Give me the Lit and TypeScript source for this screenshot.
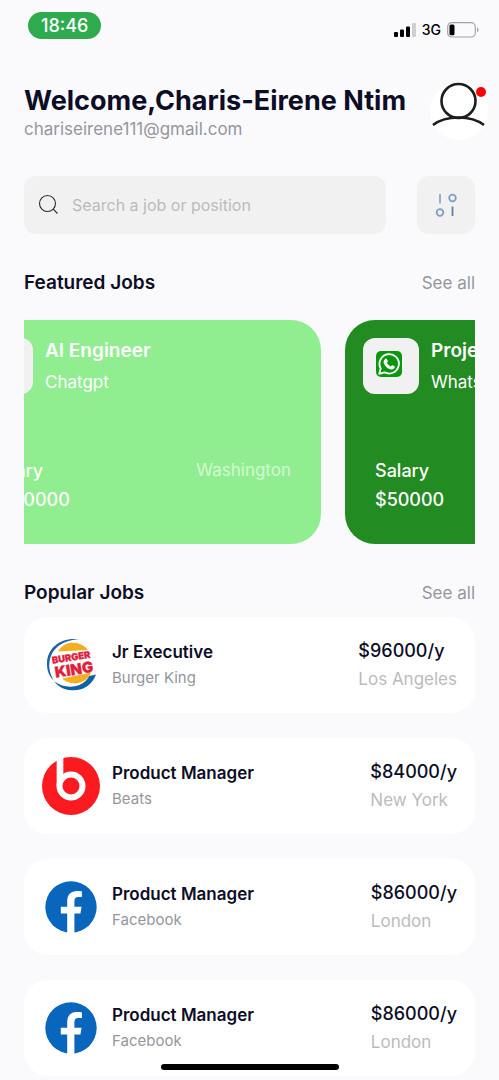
import { LitElement, html, css, svg } from "lit";
import { customElement, property, query } from "lit/decorators.js";

interface FeaturedJob {
  title: string;
  company: string;
  salary: string;
  location: string;
  tone: "light" | "dark";
  whatsapp: boolean;
}

interface PopularJob {
  title: string;
  company: string;
  salary: string;
  location: string;
  logo: "burger" | "beats" | "facebook";
}

const FEATURED: FeaturedJob[] = [
  { title: "AI Engineer", company: "Chatgpt", salary: "$200000", location: "Washington", tone: "light", whatsapp: false },
  { title: "Project Manager", company: "Whatsapp", salary: "$50000", location: "London", tone: "dark", whatsapp: true },
];

const POPULAR: PopularJob[] = [
  { title: "Jr Executive", company: "Burger King", salary: "$96000/y", location: "Los Angeles", logo: "burger" },
  { title: "Product Manager", company: "Beats", salary: "$84000/y", location: "New York", logo: "beats" },
  { title: "Product Manager", company: "Facebook", salary: "$86000/y", location: "London", logo: "facebook" },
  { title: "Product Manager", company: "Facebook", salary: "$86000/y", location: "London", logo: "facebook" },
];

const burgerLogo = svg`
  <path d="M38 3.500C20 .5 5.500 11 5 27c-.2 7 2 13 6.500 17.500C8.500 38 6.500 33 7.500 26 9.500 11.500 22 3.500 38 3.500Z" fill="#1c62a8" />
  <path d="M16 15.500C20 8.500 26 6.300 32 6.700c6 .4 11 3.300 14 7.300Z" fill="#f5ae22" />
  <path d="M20 42.500l29-6C47 42.500 41 46.800 34 47.300c-5.500.4-10.500-1.300-14-4.800Z" fill="#f5ae22" />
  <path d="M12.500 45.500C24 54 41 52 47.300 40l6.700-1.500C50 50 40 54.800 29.700 54.300 22 54 16.500 51 12.500 45.500Z" fill="#1160a8" />
  <g transform="rotate(-9 31 27)" fill="#e01f3d" stroke="#e01f3d" stroke-width=".3" font-family="Inter, sans-serif" font-weight="900" text-anchor="middle">
    <text x="30" y="24.500" font-size="9.500">BURGER</text>
    <text x="31" y="39" font-size="15">KING</text>
  </g>`;

const beatsLogo = svg`
  <circle cx="29" cy="29" r="29" fill="#fb1a20" />
  <path d="M18 0v29" stroke="#fff" stroke-width="6.700" fill="none" />
  <circle cx="29" cy="29" r="11.500" fill="#fb1a20" stroke="#fff" stroke-width="6" />`;

const facebookLogo = svg`
  <circle cx="29" cy="29" r="25.700" fill="#0866bd" />
  <path d="M25.200 55V35.500h-6.400v-6.700h6.400v-5.600c0-7 3.800-10.300 10-10.300 2 0 3.600.2 4.700.4v5.800h-3.600c-3 0-3.900 1.700-3.900 4.300v5.400h7.200l-1.200 6.700h-6V55Z" fill="#fff" />`;

const LOGOS = { burger: burgerLogo, beats: beatsLogo, facebook: facebookLogo };

@customElement("featured-card")
export class FeaturedCard extends LitElement {
  static styles = css`
    :host {
      display: block;
      flex: 0 0 362px;
    }
    .card {
      box-sizing: border-box;
      display: flex;
      flex-direction: column;
      justify-content: space-between;
      min-height: 224px;
      padding: 18px 30px 30px 18px;
      border-radius: 30px;
      color: #fff;
    }
    .light { background: #90ee90; }
    .dark { background: #228b22; }
    .top {
      display: flex;
      gap: 12px;
    }
    .badge {
      display: grid;
      place-items: center;
      width: 56px;
      height: 56px;
      border-radius: 12px;
      background: #f1f1f1;
    }
    .badge svg { width: 26px; height: 26px; margin: 0 4px 4px 0; }
    .title {
      margin: 0;
      font-size: 19px;
      line-height: 26px;
      font-weight: 600;
    }
    .company {
      margin: 6px 0 0;
      font-size: 17px;
      line-height: 24px;
    }
    .bottom {
      display: flex;
      justify-content: space-between;
      padding-left: 12px;
      font-size: 18px;
      line-height: 29px;
    }
    .bottom p { margin: 0; font-weight: 500; }
    .bottom .place { font-size: 17px; font-weight: 400; opacity: 0.6; }
  `;

  @property({ attribute: false }) job!: FeaturedJob;

  render() {
    const { title, company, salary, location, tone, whatsapp } = this.job;
    return html`
      <article class="card ${tone}">
        <div class="top">
          <div class="badge">
            ${whatsapp
              ? html`<svg viewBox="0 0 26 26" aria-hidden="true">
                  <rect width="26" height="26" rx="5" fill="#0a970f" />
                  <path d="M3.200 22.800l1.500-5.300a9.700 9.700 0 1 1 3.800 3.800Z" fill="none" stroke="#fff" stroke-width="1.800" stroke-linejoin="round" />
                  <path d="M9.300 7.700c.6-.5 1.300-.4 1.600.2l.9 2c.3.600-.7 1.400-.9 1.900.8 1.600 2.100 2.800 3.800 3.600.6-.3 1.200-1.500 1.800-1.200l2 1c.6.400.3 1.500-.2 2.100-1 1.100-2.400 1.400-4 .900-3-.8-5.500-3.100-6.500-6-.6-1.700.2-3.500 1.500-4.500Z" fill="#fff" />
                </svg>`
              : ""}
          </div>
          <div>
            <h3 class="title">${title}</h3>
            <p class="company">${company}</p>
          </div>
        </div>
        <div class="bottom">
          <div>
            <p>Salary</p>
            <p>${salary}</p>
          </div>
          <p class="place">${location}</p>
        </div>
      </article>
    `;
  }
}

@customElement("job-row")
export class JobRow extends LitElement {
  static styles = css`
    :host { display: block; }
    .row {
      display: flex;
      align-items: center;
      gap: 12px;
      box-sizing: border-box;
      min-height: 96px;
      padding: 0 18px;
      border-radius: 24px;
      background: #fff;
    }
    .logo { flex: none; width: 58px; height: 58px; }
    .role { flex: 1; }
    .title, .company, .pay, .place { margin: 0; }
    .title {
      font-size: 17px;
      line-height: 26px;
      font-weight: 600;
      color: #0d0d26;
    }
    .company {
      font-size: 15px;
      line-height: 26px;
      color: #95969d;
    }
    .pay {
      font-size: 18px;
      line-height: 29px;
      font-weight: 500;
      color: #0d0d26;
    }
    .place {
      font-size: 17px;
      line-height: 29px;
      color: #bbbbbe;
    }
  `;

  @property({ attribute: false }) job!: PopularJob;

  render() {
    const { title, company, salary, location, logo } = this.job;
    return html`
      <article class="row">
        <svg class="logo" viewBox="0 0 58 58" aria-hidden="true">${LOGOS[logo]}</svg>
        <div class="role">
          <h3 class="title">${title}</h3>
          <p class="company">${company}</p>
        </div>
        <div>
          <p class="pay">${salary}</p>
          <p class="place">${location}</p>
        </div>
      </article>
    `;
  }
}

@customElement("app-root")
export class AppRoot extends LitElement {
  static styles = css`
    :host {
      display: block;
      min-height: 100vh;
      background: #fafafd;
      color: #0d0d26;
      font-family: Inter, "Liberation Sans", sans-serif;
    }
    .status {
      display: flex;
      align-items: center;
      justify-content: space-between;
      padding: 12px 20px 0 28px;
    }
    .clock {
      padding: 0 13px;
      border-radius: 14px;
      background: #2fab4f;
      color: #fff;
      font-size: 18px;
      line-height: 27px;
      font-weight: 500;
    }
    .signals {
      display: flex;
      align-items: center;
      gap: 6px;
      padding-top: 8px;
      color: #000;
      font-size: 14px;
      line-height: 19px;
      font-weight: 500;
    }
    .signals svg { display: block; }
    .header {
      display: flex;
      align-items: flex-end;
      justify-content: space-between;
      gap: 12px;
      padding: 43px 11px 0 24px;
    }
    .welcome {
      margin: 0;
      font-size: 27px;
      line-height: 34px;
      font-weight: 700;
    }
    .email {
      margin: 0;
      font-size: 17px;
      line-height: 22px;
      color: #95969d;
    }
    .avatar {
      position: relative;
      flex: none;
      width: 58px;
      height: 58px;
      padding: 0;
      border: 0;
      border-radius: 50%;
      background: #fff;
    }
    .avatar svg { display: block; }
    .dot {
      position: absolute;
      top: 5px;
      right: 2px;
      width: 10px;
      height: 10px;
      border-radius: 50%;
      background: #f00;
    }
    .content { padding: 36px 24px 5px; }
    .search {
      display: flex;
      justify-content: space-between;
      gap: 31px;
    }
    .field {
      flex: 1;
      display: flex;
      align-items: center;
      gap: 12px;
      height: 58px;
      padding: 0 14px;
      border-radius: 12px;
      background: #f1f1f1;
    }
    .field svg { flex: none; }
    .input {
      flex: 1;
      min-width: 0;
      padding: 0;
      border: 0;
      outline: 0;
      background: none;
      color: #0d0d26;
      font-family: inherit;
      font-size: 16px;
      line-height: 24px;
    }
    .input::placeholder { color: #bbbbbe; opacity: 1; }
    .filter {
      display: grid;
      place-items: center;
      width: 58px;
      height: 58px;
      padding: 0;
      border: 0;
      border-radius: 12px;
      background: #f1f1f1;
    }
    .heading {
      display: flex;
      align-items: center;
      justify-content: space-between;
      margin-top: 36px;
    }
    .heading h2 {
      margin: 0;
      font-size: 19px;
      line-height: 26px;
      font-weight: 600;
    }
    .heading a {
      color: #95969d;
      font-size: 17px;
      line-height: 26px;
      text-decoration: none;
    }
    .carousel {
      display: flex;
      gap: 24px;
      margin-top: 24px;
      overflow-x: auto;
      scrollbar-width: none;
    }
    .jobs {
      display: flex;
      flex-direction: column;
      gap: 25px;
      margin-top: 11px;
    }
    .home {
      position: fixed;
      bottom: 10px;
      left: 50%;
      width: 178px;
      height: 6px;
      border-radius: 3px;
      background: #000;
      transform: translateX(-50%);
    }
  `;

  @query(".carousel") carousel!: HTMLElement;

  async firstUpdated() {
    // Open the carousel partway through the first card, so that the next one peeks in.
    const cards = Array.from(this.renderRoot.querySelectorAll<FeaturedCard>("featured-card"));
    await Promise.all(cards.map((card) => card.updateComplete));
    this.carousel.scrollLeft = 65;
  }

  render() {
    return html`
      <div class="status">
        <time class="clock">18:46</time>
        <div class="signals">
          <svg width="22" height="14" viewBox="0 0 22 14" aria-hidden="true">
            <rect x="0" y="9" width="4" height="5" rx="1" />
            <rect x="6" y="6.500" width="4" height="7.500" rx="1" />
            <rect x="12" y="3.500" width="4" height="10.500" rx="1" />
            <rect x="18" y="0" width="4" height="14" rx="1" fill="#cfcfd1" />
          </svg>
          <span>3G</span>
          <svg width="32" height="16" viewBox="0 0 32 16" aria-hidden="true">
            <rect x=".7" y=".7" width="27.600" height="14.300" rx="4" fill="none" stroke="#a3a3a6" stroke-width="1.200" />
            <rect x="2.500" y="2.500" width="5" height="10.700" rx="1.500" />
            <path d="M30 5.500c2 .7 2 4 0 4.700Z" fill="#a3a3a6" />
          </svg>
        </div>
      </div>

      <header class="header">
        <div>
          <h1 class="welcome">Welcome,Charis-Eirene Ntim</h1>
          <p class="email">chariseirene111@gmail.com</p>
        </div>
        <button class="avatar" aria-label="Profile">
          <svg width="58" height="58" viewBox="0 0 58 58" fill="none" stroke="#1d1d1b" stroke-width="2.600" aria-hidden="true">
            <circle cx="28.500" cy="19" r="17" />
            <path d="M3 43C16 33 41 33 54 43" />
          </svg>
          <span class="dot"></span>
        </button>
      </header>

      <main class="content">
        <div class="search">
          <label class="field">
            <svg width="22" height="22" viewBox="0 0 22 22" fill="none" stroke="#2b2b2b" stroke-width="1.100" aria-hidden="true">
              <circle cx="9.500" cy="9.500" r="8" />
              <path d="M15.200 15.200l4.300 4.300" />
            </svg>
            <input class="input" type="text" placeholder="Search a job or position" aria-label="Search a job or position" />
          </label>
          <button class="filter" aria-label="Filter">
            <svg width="22" height="24" viewBox="0 0 22 24" fill="none" stroke="#7f9fc4" stroke-width="1.800" aria-hidden="true">
              <path d="M5 1v9.500" stroke="#8fa9c8" />
              <circle cx="17.500" cy="5" r="3.300" />
              <circle cx="5" cy="19.500" r="3.300" />
              <path d="M17.500 13.500V23" stroke="#5f7fa8" />
            </svg>
          </button>
        </div>

        <section>
          <div class="heading">
            <h2>Featured Jobs</h2>
            <a href="#featured">See all</a>
          </div>
          <div class="carousel">
            ${FEATURED.map((job) => html`<featured-card .job=${job}></featured-card>`)}
          </div>
        </section>

        <section>
          <div class="heading">
            <h2>Popular Jobs</h2>
            <a href="#popular">See all</a>
          </div>
          <div class="jobs">
            ${POPULAR.map((job) => html`<job-row .job=${job}></job-row>`)}
          </div>
        </section>
      </main>

      <div class="home"></div>
    `;
  }
}
